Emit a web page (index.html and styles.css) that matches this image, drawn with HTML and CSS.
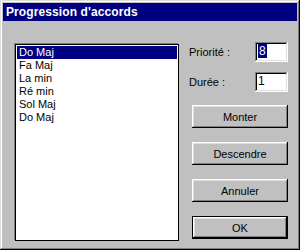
FILE: index.html
```html
<!DOCTYPE html>
<html lang="fr">
<head>
    <meta charset="UTF-8">
    <title>Progression d'accords</title>
    <link rel="stylesheet" href="styles.css">
</head>
<body>
    <div class="window">
        <div class="title-bar">Progression d'accords</div>
        <div class="body">
            <ul class="list">
                <li class="selected">Do Maj</li>
                <li>Fa Maj</li>
                <li>La min</li>
                <li>Ré min</li>
                <li>Sol Maj</li>
                <li>Do Maj</li>
            </ul>
            <div class="side">
                <div class="field">
                    <label>Priorité :</label>
                    <span class="input"><span class="sel">8</span></span>
                </div>
                <div class="field">
                    <label>Durée :</label>
                    <span class="input">1</span>
                </div>
                <div class="buttons">
                    <button class="btn">Monter</button>
                    <button class="btn">Descendre</button>
                    <button class="btn">Annuler</button>
                    <button class="btn btn-default">OK</button>
                </div>
            </div>
        </div>
    </div>
</body>
</html>
```
FILE: styles.css
```css
body {
    margin: 0;
    font-family: "Liberation Sans", Arial, sans-serif;
    font-size: 11px;
    color: #000;
}
.window {
    width: 300px;
    height: 250px;
    box-sizing: border-box;
    padding: 3px;
    background: #c0c0c0;
    box-shadow: inset -1px -1px #000, inset 1px 1px #dfdfdf,
                inset -2px -2px #808080, inset 2px 2px #fff;
    display: flex;
    flex-direction: column;
}
.title-bar {
    height: 18px;
    line-height: 18px;
    background: #000080;
    color: #fff;
    font-weight: bold;
    font-size: 12px;
    letter-spacing: 0.1px;
    padding-left: 3px;
}
.body {
    display: flex;
    gap: 10px;
    padding: 23px 8px 0 12px;
}

/* liste des accords */
.list {
    width: 164px;
    height: 197px;
    box-sizing: border-box;
    margin: 0;
    padding: 1px;
    list-style: none;
    background: #fff;
    border: 1px solid #000;
    box-shadow: -1px -1px 0 #808080;
}
.list li {
    height: 13px;
    line-height: 13px;
    padding-left: 2px;
}
.list li.selected {
    background: #000080;
    color: #fff;
}

.side {
    width: 99px;
    margin-top: -2px;
}
.field {
    display: flex;
    justify-content: space-between;
    align-items: center;
    height: 20px;
}
.field + .field { margin-top: 10px; }
.input {
    width: 33px;
    height: 20px;
    box-sizing: border-box;
    padding: 3px 3px 0;
    background: #fff;
    box-shadow: inset -1px -1px #fff, inset 1px 1px #808080,
                inset -2px -2px #dfdfdf, inset 2px 2px #000;
    line-height: 13px;
    font-size: 12px;
}
.input .sel {
    background: #000080;
    color: #fff;
    padding: 0 1px;
}

.buttons {
    display: flex;
    flex-direction: column;
    gap: 14px;
    margin: 13px 0 0 3px;
}
.btn {
    width: 96px;
    height: 23px;
    padding: 0;
    border: none;
    background: #c0c0c0;
    font-family: inherit;
    font-size: 11px;
    color: #000;
    box-shadow: inset -1px -1px #000, inset 1px 1px #fff,
                inset -2px -2px #808080, inset 2px 2px #dfdfdf;
}
.btn-default {
    box-shadow: inset 0 0 0 1px #000, inset -2px -2px #000,
                inset 2px 2px #fff, inset -3px -3px #808080,
                inset 3px 3px #dfdfdf;
}
```
